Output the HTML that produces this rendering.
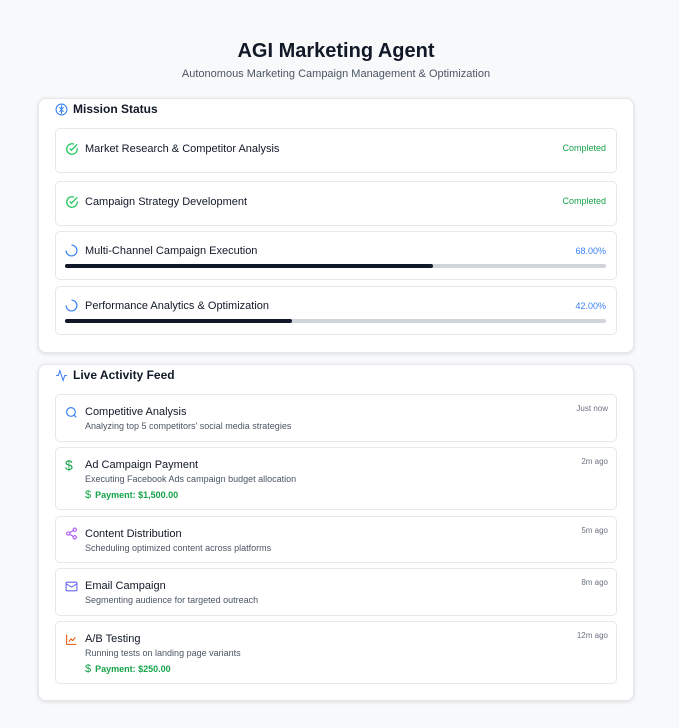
<!DOCTYPE html>
<html><head><meta charset="utf-8"><style>
*{box-sizing:border-box;margin:0;padding:0}
body{width:679px;height:728px;background:#f8f9fb;font-family:"Liberation Sans",sans-serif;color:#111827;position:relative;overflow:hidden}
h1{position:absolute;top:40px;left:0;width:672px;text-align:center;font-size:20px;font-weight:bold;color:#111827}
.sub{position:absolute;top:68px;left:0;width:672px;text-align:center;font-size:11px;color:#4b5563}
.card{position:absolute;left:38px;width:596px;background:#fff;border:1px solid #e5e7eb;border-radius:8px;box-shadow:0 1px 4px rgba(0,0,0,.12)}
.ct{position:absolute;left:16px;top:3px;font-size:12px;font-weight:bold;display:flex;align-items:center;gap:5px}
.item{position:absolute;left:16px;width:562px;border:1px solid #e5e7eb;border-radius:5px;background:#fff}
.t{position:absolute;left:29px;font-size:11px;color:#111827}
.st{position:absolute;right:10px;font-size:9px}
.ic{position:absolute;left:9px}
.bar{position:absolute;left:9px;right:10px;height:4px;background:#d1d5db;border-radius:2px}
.bar i{display:block;height:4px;background:#111827;border-radius:2px}
.d{position:absolute;left:29px;font-size:9px;color:#4b5563}
.pay{position:absolute;left:29px;font-size:9px;color:#16a34a;font-weight:bold}
.tm{position:absolute;right:8px;top:9px;font-size:8px;color:#6b7280}
</style></head><body>
<h1>AGI Marketing Agent</h1>
<div class="sub">Autonomous Marketing Campaign Management &amp; Optimization</div>

<div class="card" style="top:98px;height:255px">
<div class="ct"><svg width="13" height="13" viewBox="0 0 24 24" fill="none" stroke="#3b82f6" stroke-width="2"><circle cx="12" cy="12" r="10"/><path d="M12 4v16M8 8c2 1 2 3 4 3s2-2 4-3M8 16c2-1 2-3 4-3s2 2 4 3"/></svg>Mission Status</div>
<div class="item" style="top:29px;height:45px">
<svg class="ic" style="top:13px" width="14" height="14" viewBox="0 0 24 24" fill="none" stroke="#22c55e" stroke-width="2.2"><path d="M21 11v1a9 9 0 1 1-5.3-8.2"/><path d="M8 11l3 3L21 4"/></svg>
<div class="t" style="top:14px">Market Research &amp; Competitor Analysis</div><div class="st" style="top:14px;color:#16a34a">Completed</div></div>
<div class="item" style="top:82px;height:45px">
<svg class="ic" style="top:13px" width="14" height="14" viewBox="0 0 24 24" fill="none" stroke="#22c55e" stroke-width="2.2"><path d="M21 11v1a9 9 0 1 1-5.3-8.2"/><path d="M8 11l3 3L21 4"/></svg>
<div class="t" style="top:14px">Campaign Strategy Development</div><div class="st" style="top:14px;color:#16a34a">Completed</div></div>
<div class="item" style="top:132px;height:49px">
<svg class="ic" style="top:12px" width="13" height="13" viewBox="0 0 24 24" fill="none" stroke="#3b82f6" stroke-width="2.2"><path d="M12 2a10 10 0 1 1-10 10"/></svg>
<div class="t" style="top:13px">Multi-Channel Campaign Execution</div><div class="st" style="top:14px;color:#3b82f6">68.00%</div>
<div class="bar" style="top:32px"><i style="width:68%"></i></div></div>
<div class="item" style="top:187px;height:49px">
<svg class="ic" style="top:12px" width="13" height="13" viewBox="0 0 24 24" fill="none" stroke="#3b82f6" stroke-width="2.2"><path d="M12 2a10 10 0 1 1-10 10"/></svg>
<div class="t" style="top:13px">Performance Analytics &amp; Optimization</div><div class="st" style="top:14px;color:#3b82f6">42.00%</div>
<div class="bar" style="top:32px"><i style="width:42%"></i></div></div>
</div>

<div class="card" style="top:364px;height:337px">
<div class="ct"><svg width="13" height="13" viewBox="0 0 24 24" fill="none" stroke="#3b82f6" stroke-width="2"><path d="M22 12h-4l-3 9L9 3l-3 9H2"/></svg>Live Activity Feed</div>
<div class="item" style="top:29px;height:48px">
<svg class="ic" style="top:11px" width="13" height="13" viewBox="0 0 24 24" fill="none" stroke="#3b82f6" stroke-width="2.2"><circle cx="11" cy="11" r="8"/><path d="M21 21l-4.3-4.3"/></svg>
<div class="t" style="top:11px">Competitive Analysis</div><div class="d" style="top:26px">Analyzing top 5 competitors' social media strategies</div><div class="tm">Just now</div></div>
<div class="item" style="top:82px;height:63px">
<div class="ic" style="top:9px;color:#16a34a;font-size:14px">$</div>
<div class="t" style="top:11px">Ad Campaign Payment</div><div class="d" style="top:26px">Executing Facebook Ads campaign budget allocation</div>
<div class="pay" style="top:41px"><span style="font-size:11px;margin-right:4px;font-weight:normal">$</span>Payment: $1,500.00</div><div class="tm">2m ago</div></div>
<div class="item" style="top:151px;height:47px">
<svg class="ic" style="top:10px" width="13" height="13" viewBox="0 0 24 24" fill="none" stroke="#a855f7" stroke-width="2"><circle cx="18" cy="5" r="3"/><circle cx="6" cy="12" r="3"/><circle cx="18" cy="19" r="3"/><path d="M8.6 13.5l6.8 4M15.4 6.5l-6.8 4"/></svg>
<div class="t" style="top:11px">Content Distribution</div><div class="d" style="top:26px">Scheduling optimized content across platforms</div><div class="tm">5m ago</div></div>
<div class="item" style="top:203px;height:48px">
<svg class="ic" style="top:11px" width="13" height="13" viewBox="0 0 24 24" fill="none" stroke="#6366f1" stroke-width="2"><rect x="2" y="4" width="20" height="16" rx="2"/><path d="M22 7l-10 6L2 7"/></svg>
<div class="t" style="top:11px">Email Campaign</div><div class="d" style="top:26px">Segmenting audience for targeted outreach</div><div class="tm">8m ago</div></div>
<div class="item" style="top:256px;height:63px">
<svg class="ic" style="top:11px" width="13" height="13" viewBox="0 0 24 24" fill="none" stroke="#ea580c" stroke-width="2"><path d="M3 3v18h18"/><path d="M7 16l4-5 3 3 5-6"/></svg>
<div class="t" style="top:11px">A/B Testing</div><div class="d" style="top:26px">Running tests on landing page variants</div>
<div class="pay" style="top:41px"><span style="font-size:11px;margin-right:4px;font-weight:normal">$</span>Payment: $250.00</div><div class="tm">12m ago</div></div>
</div>
</body></html>
